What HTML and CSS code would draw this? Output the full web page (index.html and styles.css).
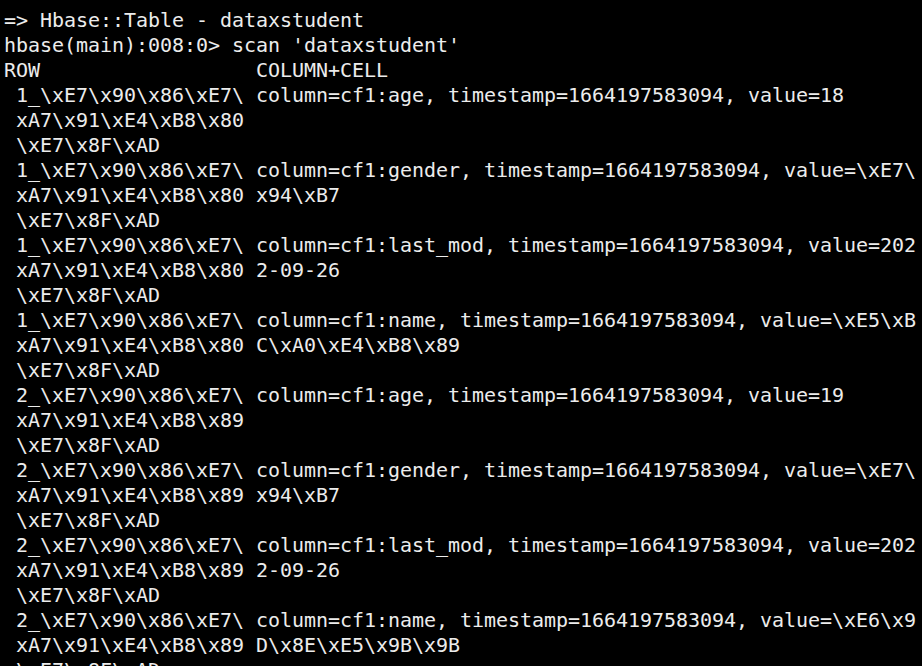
FILE: index.html
```html
<!DOCTYPE html>
<html>
<head>
<meta charset="utf-8">
<link rel="stylesheet" href="styles.css">
</head>
<body>
<pre class="term">=> Hbase::Table - dataxstudent
hbase(main):008:0> scan 'dataxstudent'
ROW                  COLUMN+CELL
 1_\xE7\x90\x86\xE7\ column=cf1:age, timestamp=1664197583094, value=18
 xA7\x91\xE4\xB8\x80
 \xE7\x8F\xAD
 1_\xE7\x90\x86\xE7\ column=cf1:gender, timestamp=1664197583094, value=\xE7\
 xA7\x91\xE4\xB8\x80 x94\xB7
 \xE7\x8F\xAD
 1_\xE7\x90\x86\xE7\ column=cf1:last_mod, timestamp=1664197583094, value=202
 xA7\x91\xE4\xB8\x80 2-09-26
 \xE7\x8F\xAD
 1_\xE7\x90\x86\xE7\ column=cf1:name, timestamp=1664197583094, value=\xE5\xB
 xA7\x91\xE4\xB8\x80 C\xA0\xE4\xB8\x89
 \xE7\x8F\xAD
 2_\xE7\x90\x86\xE7\ column=cf1:age, timestamp=1664197583094, value=19
 xA7\x91\xE4\xB8\x89
 \xE7\x8F\xAD
 2_\xE7\x90\x86\xE7\ column=cf1:gender, timestamp=1664197583094, value=\xE7\
 xA7\x91\xE4\xB8\x89 x94\xB7
 \xE7\x8F\xAD
 2_\xE7\x90\x86\xE7\ column=cf1:last_mod, timestamp=1664197583094, value=202
 xA7\x91\xE4\xB8\x89 2-09-26
 \xE7\x8F\xAD
 2_\xE7\x90\x86\xE7\ column=cf1:name, timestamp=1664197583094, value=\xE6\x9
 xA7\x91\xE4\xB8\x89 D\x8E\xE5\x9B\x9B
 \xE7\x8F\xAD</pre>
</body>
</html>
```
FILE: styles.css
```css
html, body {
  margin: 0;
  padding: 0;
  background: #000;
  overflow: hidden;
}
.term {
  margin: 0;
  padding: 8px 0 0 4px;
  font-family: "DejaVu Sans Mono", monospace;
  font-size: 20px;
  line-height: 25px;
  letter-spacing: -0.04px;
  color: #ececec;
  white-space: pre;
}
```
